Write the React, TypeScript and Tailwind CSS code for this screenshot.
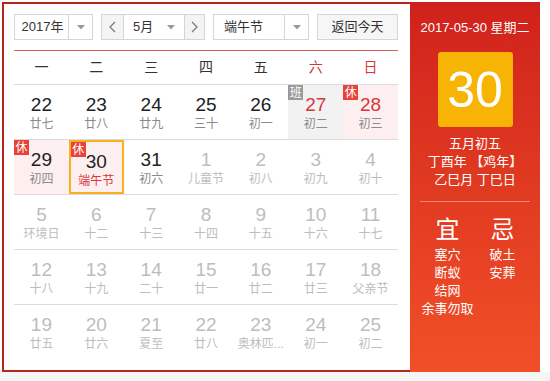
import React from 'react';

type Day = {
  n: number;
  lunar: string;
  other?: boolean;
  red?: boolean;
  bg?: string;
  badge?: '休' | '班';
  today?: boolean;
  lunarRed?: boolean;
};

const WEEK = ['一', '二', '三', '四', '五', '六', '日'];

const ROWS: Day[][] = [
  [
    { n: 22, lunar: '廿七' },
    { n: 23, lunar: '廿八' },
    { n: 24, lunar: '廿九' },
    { n: 25, lunar: '三十' },
    { n: 26, lunar: '初一' },
    { n: 27, lunar: '初二', red: true, bg: 'gray', badge: '班' },
    { n: 28, lunar: '初三', red: true, bg: 'pink', badge: '休' },
  ],
  [
    { n: 29, lunar: '初四', bg: 'pink', badge: '休' },
    { n: 30, lunar: '端午节', bg: 'pink', badge: '休', today: true, lunarRed: true },
    { n: 31, lunar: '初六' },
    { n: 1, lunar: '儿童节', other: true },
    { n: 2, lunar: '初八', other: true },
    { n: 3, lunar: '初九', other: true },
    { n: 4, lunar: '初十', other: true },
  ],
  [
    { n: 5, lunar: '环境日', other: true },
    { n: 6, lunar: '十二', other: true },
    { n: 7, lunar: '十三', other: true },
    { n: 8, lunar: '十四', other: true },
    { n: 9, lunar: '十五', other: true },
    { n: 10, lunar: '十六', other: true },
    { n: 11, lunar: '十七', other: true },
  ],
  [
    { n: 12, lunar: '十八', other: true },
    { n: 13, lunar: '十九', other: true },
    { n: 14, lunar: '二十', other: true },
    { n: 15, lunar: '廿一', other: true },
    { n: 16, lunar: '廿二', other: true },
    { n: 17, lunar: '廿三', other: true },
    { n: 18, lunar: '父亲节', other: true },
  ],
  [
    { n: 19, lunar: '廿五', other: true },
    { n: 20, lunar: '廿六', other: true },
    { n: 21, lunar: '夏至', other: true },
    { n: 22, lunar: '廿八', other: true },
    { n: 23, lunar: '奥林匹...', other: true },
    { n: 24, lunar: '初一', other: true },
    { n: 25, lunar: '初二', other: true },
  ],
];

const Caret = () => (
  <svg width="8" height="5" viewBox="0 0 8 5"><path d="M0 0h8L4 4.5z" fill="#9a9a9a" /></svg>
);

const Chevron = ({ dir }: { dir: 'l' | 'r' }) => (
  <svg width="7" height="12" viewBox="0 0 7 12">
    <polyline points={dir === 'l' ? '6,1 1,6 6,11' : '1,1 6,6 1,11'} fill="none" stroke="#777" strokeWidth="1.2" />
  </svg>
);

const Cell = ({ d }: { d: Day }) => {
  const bg = d.bg === 'gray' ? 'bg-[#f2f2f2]' : d.bg === 'pink' ? 'bg-[#fdefef]' : '';
  const num = d.other ? 'text-[#bdbdbd]' : d.red ? 'text-[#d8363a]' : 'text-[#222]';
  const lunar = d.lunarRed ? 'text-[#d8363a]' : d.other ? 'text-[#bdbdbd]' : 'text-[#8a8a8a]';
  return (
    <div className={`relative h-[54px] flex flex-col items-center pt-[9px] ${bg} ${d.today ? 'border-2 border-[#f5b21b] pt-[7px]' : ''}`}>
      {d.badge && (
        <span
          className={`absolute left-0 top-0 ${d.today ? '-left-[2px] -top-[2px]' : ''} w-[15px] h-[15px] flex items-center justify-center text-[12px] leading-none text-white ${d.badge === '休' ? 'bg-[#e8423a]' : 'bg-[#9a9a9a]'}`}
        >
          {d.badge}
        </span>
      )}
      <span className={`text-[19px] leading-[22px] font-['Liberation_Sans',sans-serif] ${num}`}>{d.n}</span>
      <span className={`text-[12px] leading-[16px] whitespace-nowrap ${lunar}`}>{d.lunar}</span>
    </div>
  );
};

export default function App() {
  return (
    <div className="w-[550px] h-[381px] bg-white font-['Liberation_Sans','Noto_Sans_CJK_SC',sans-serif] text-[#333]">
      <div className="flex pl-[2px] pt-[2px]">
        <div className="w-[408px] h-[370px] border-2 border-r-0 border-[#b7261d] pl-[10px] pr-[10px] pt-[10px]">
          <div className="flex gap-[8px] h-[26px] text-[13px]">
            <div className="w-[79px] flex border border-[#d5d5d5] bg-white">
              <div className="flex-1 flex items-center justify-center pl-[2px]">2017年</div>
              <div className="w-[24px] border-l border-[#d5d5d5] flex items-center justify-center"><Caret /></div>
            </div>
            <div className="w-[104px] flex border border-[#d5d5d5] bg-white">
              <div className="w-[22px] bg-[#f4f4f4] border-r border-[#d5d5d5] flex items-center justify-center"><Chevron dir="l" /></div>
              <div className="flex-1 flex items-center pl-[9px]">
                <span>5月</span>
                <span className="ml-auto mr-[9px]"><Caret /></span>
              </div>
              <div className="w-[20px] bg-[#f4f4f4] border-l border-[#d5d5d5] flex items-center justify-center"><Chevron dir="r" /></div>
            </div>
            <div className="w-[96px] flex border border-[#d5d5d5] bg-white">
              <div className="flex-1 flex items-center pl-[10px]">端午节</div>
              <div className="w-[24px] border-l border-[#d5d5d5] flex items-center justify-center"><Caret /></div>
            </div>
            <div className="w-[81px] flex items-center justify-center border border-[#d5d5d5] bg-[#f6f6f6] text-[13px]">返回今天</div>
          </div>

          <div className="w-[384px] mt-[10px] border-t border-[#d9605a]">
            <div className="grid grid-cols-7 h-[34px] items-center border-b border-[#dcdcdc] text-[14px] text-[#333]">
              {WEEK.map((w, i) => (
                <div key={w} className={`text-center ${i >= 5 ? 'text-[#d8363a]' : ''}`}>{w}</div>
              ))}
            </div>
            {ROWS.map((row, ri) => (
              <div key={ri} className={`grid grid-cols-7 ${ri < ROWS.length - 1 ? 'border-b border-[#dcdcdc]' : ''}`}>
                {row.map((d, ci) => <Cell key={ci} d={d} />)}
              </div>
            ))}
          </div>
        </div>

        <div className="w-[130px] h-[370px] bg-gradient-to-b from-[#d0201c] to-[#f14f27] text-white flex flex-col items-center">
          <div className="mt-[17px] text-[13px] leading-[18px] font-['Liberation_Sans','Noto_Sans_CJK_SC',sans-serif]">2017-05-30 星期二</div>
          <div className="mt-[15px] w-[75px] h-[75px] rounded-[3px] bg-[#f8b404] flex items-center justify-center text-[50px] leading-none font-['Liberation_Sans',sans-serif]">30</div>
          <div className="mt-[8px] text-[13px] leading-[18px] text-center">
            <div>五月初五</div>
            <div>丁酉年 【鸡年】</div>
            <div>乙巳月 丁巳日</div>
          </div>
          <div className="mt-[12px] w-[110px] h-px bg-white/40" />
          <div className="mt-[14px] w-[110px] grid grid-cols-2 text-center">
            <div className="flex flex-col items-center">
              <div className="text-[24px] leading-[28px]">宜</div>
              <div className="text-[13px] leading-[18px] mt-[2px]">
                <div>塞穴</div>
                <div>断蚁</div>
                <div>结网</div>
                <div>余事勿取</div>
              </div>
            </div>
            <div className="flex flex-col items-center">
              <div className="text-[24px] leading-[28px]">忌</div>
              <div className="text-[13px] leading-[18px] mt-[2px]">
                <div>破土</div>
                <div>安葬</div>
              </div>
            </div>
          </div>
        </div>
      </div>
      <div className="h-[9px] bg-[#f5f5f5]" />
    </div>
  );
}
